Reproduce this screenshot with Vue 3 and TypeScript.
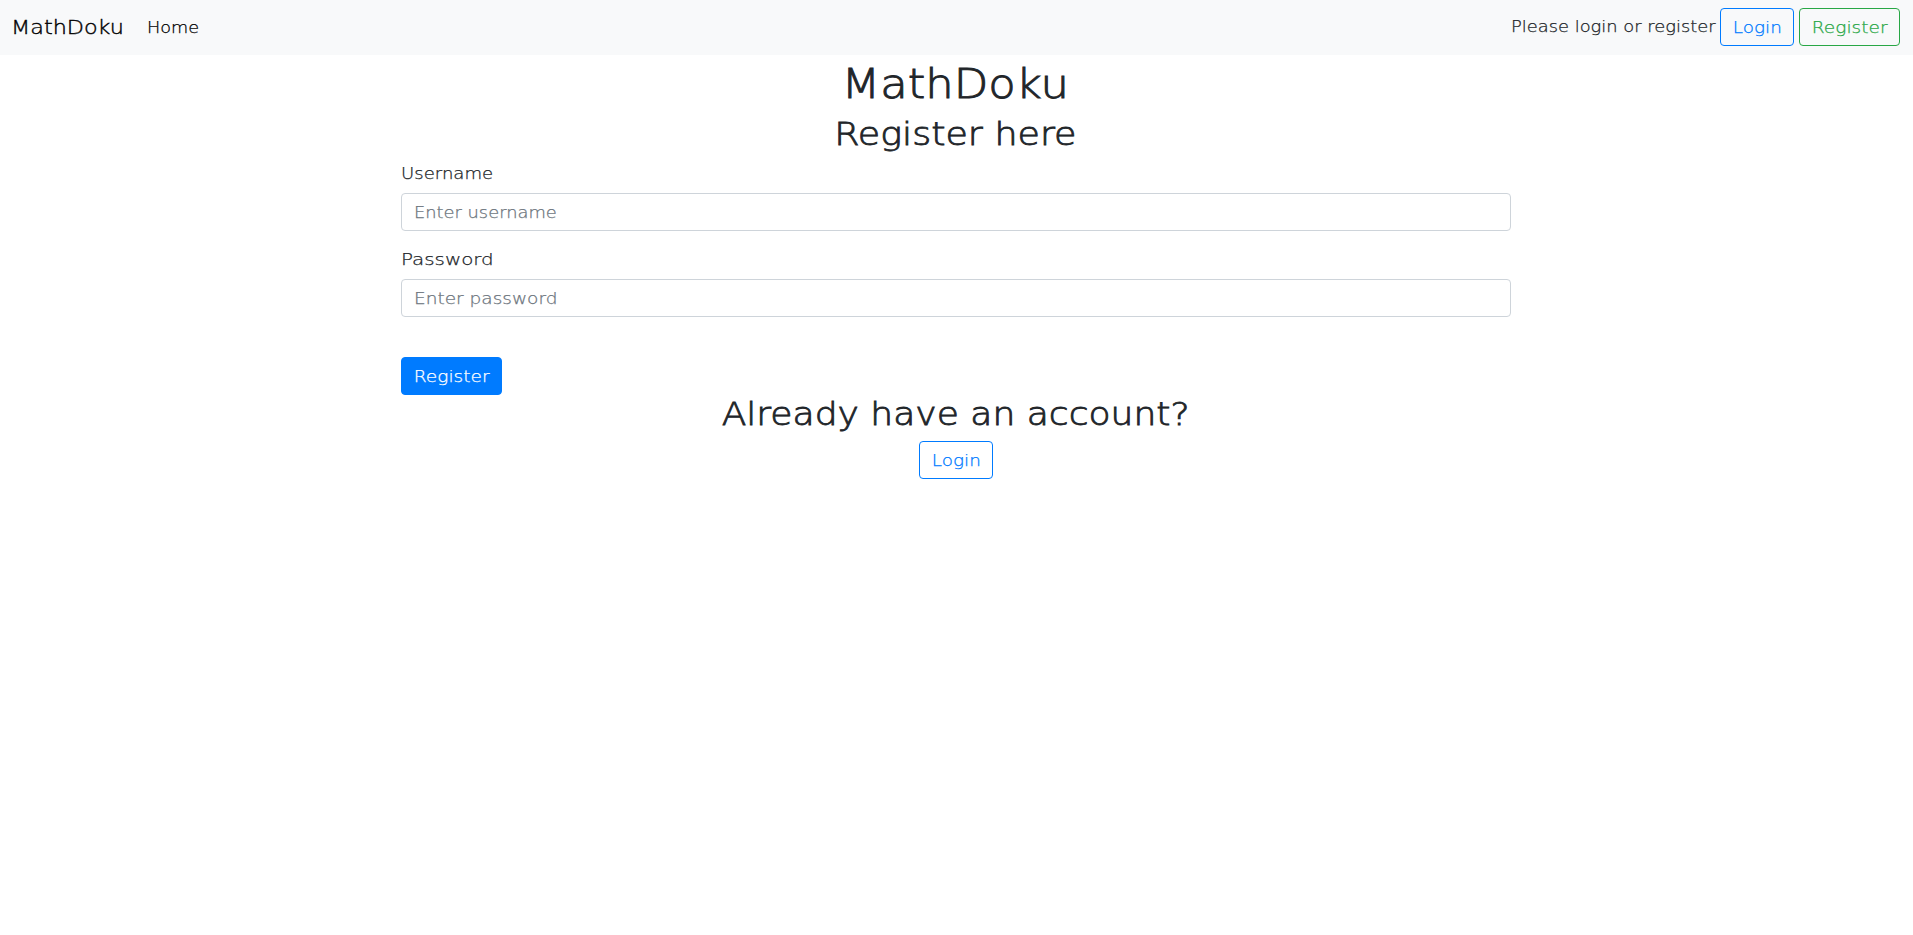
<script setup lang="ts">
import { ref } from 'vue'

interface Field {
  id: string
  label: string
  type: string
  placeholder: string
}

const fields: Field[] = [
  { id: 'username', label: 'Username', type: 'text', placeholder: 'Enter username' },
  { id: 'password', label: 'Password', type: 'password', placeholder: 'Enter password' },
]

const values = ref<Record<string, string>>({ username: '', password: '' })
</script>

<template>
  <nav class="navbar">
    <a class="brand">MathDoku</a>
    <a class="nav-link">Home</a>
    <div class="account">
      <div class="hint"><span>Please login or register</span></div>
      <button class="btn outline-primary login"><span>Login</span></button>
      <button class="btn outline-success register"><span>Register</span></button>
    </div>
  </nav>
  <main class="container">
    <h1>MathDoku</h1>
    <h2 class="lead">Register here</h2>
    <form @submit.prevent>
      <div v-for="field in fields" :key="field.id" class="form-group">
        <label :for="field.id" :class="field.id">{{ field.label }}</label>
        <div class="control">
          <input
            :id="field.id"
            v-model="values[field.id]"
            :class="field.id"
            :type="field.type"
            :placeholder="field.placeholder"
          />
        </div>
      </div>
      <button class="btn primary register" type="submit"><span>Register</span></button>
    </form>
    <h2 class="question">Already have an account?</h2>
    <button class="btn outline-primary login"><span>Login</span></button>
  </main>
</template>

<style>
body {
  margin: 0;
  background: #fff;
}
</style>

<style scoped>
.navbar,
.container,
.btn,
input {
  font-family: 'DejaVu Sans', sans-serif;
  font-weight: 200;
  font-size: 16px;
  line-height: 24px;
  color: #212529;
  box-sizing: border-box;
  -webkit-text-stroke: 0.25px;
}
.navbar {
  display: flex;
  align-items: center;
  height: 55px;
  padding: 0 13px 1px 11px;
  background: #f8f9fa;
}
.brand {
  width: 136px;
  font-size: 20px;
  line-height: 30px;
  color: #000;
  transform: scaleX(1.115);
  transform-origin: left;
  -webkit-text-stroke: 0.4px;
}
.nav-link {
  padding-top: 1px;
  color: #000;
  transform: scaleX(1.1);
  transform-origin: left;
}
.account {
  display: flex;
  align-items: center;
  margin-left: auto;
}
.hint {
  width: 209px;
  white-space: nowrap;
}
.hint span {
  display: inline-block;
  transform: scaleX(1.117);
  transform-origin: left;
}
.btn {
  display: block;
  height: 38px;
  padding: 1px 0 0;
  border: 1px solid;
  border-radius: 4px;
  text-align: center;
  cursor: pointer;
}
.btn span {
  display: inline-block;
}
.login {
  width: 74px;
}
.login span {
  transform: scaleX(1.15);
}
.register {
  width: 101px;
}
.register span {
  transform: scaleX(1.16);
}
.account .register {
  margin-left: 5px;
}
.outline-primary {
  color: #007bff;
  background: transparent;
  border-color: #007bff;
}
.outline-success {
  color: #28a745;
  background: transparent;
  border-color: #28a745;
}
.primary {
  color: #fff;
  background: #007bff;
  border-color: #007bff;
}
.container {
  display: flex;
  flex-direction: column;
  align-items: center;
  width: 1110px;
  margin-left: calc(50% - 555.5px);
  padding-top: 4px;
}
h1,
h2 {
  box-sizing: border-box;
  margin: 0;
  font-weight: 200;
  white-space: nowrap;
}
h1 {
  height: 56px;
  padding: 1px 2px 0 0;
  font-size: 40px;
  line-height: 48px;
  transform: scaleX(1.122);
  -webkit-text-stroke: 0.9px;
}
h2 {
  height: 46px;
  font-size: 32px;
  line-height: 38px;
  -webkit-text-stroke: 0.8px;
}
.lead {
  padding-right: 2px;
  transform: scaleX(1.138);
}
.question {
  transform: scaleX(1.127);
}
form {
  width: 100%;
}
.form-group {
  margin-bottom: 16px;
}
label {
  display: block;
  box-sizing: border-box;
  width: max-content;
  height: 24px;
  margin-bottom: 8px;
  padding-top: 1px;
  transform-origin: left;
}
label.username {
  transform: scaleX(1.13);
}
label.password {
  transform: scaleX(1.24);
}
.control {
  box-sizing: border-box;
  height: 38px;
  padding: 0 12px;
  border: 1px solid #ced4da;
  border-radius: 4px;
  background: #fff;
}
input {
  display: block;
  width: 86%;
  height: 36px;
  padding: 0;
  border: 0;
  background: transparent;
  outline: none;
  transform-origin: left;
}
input.username {
  transform: scaleX(1.115);
}
input.password {
  transform: scaleX(1.157);
}
input::placeholder {
  color: #6c757d;
  opacity: 1;
}
form .register {
  margin-top: 40px;
}
</style>
